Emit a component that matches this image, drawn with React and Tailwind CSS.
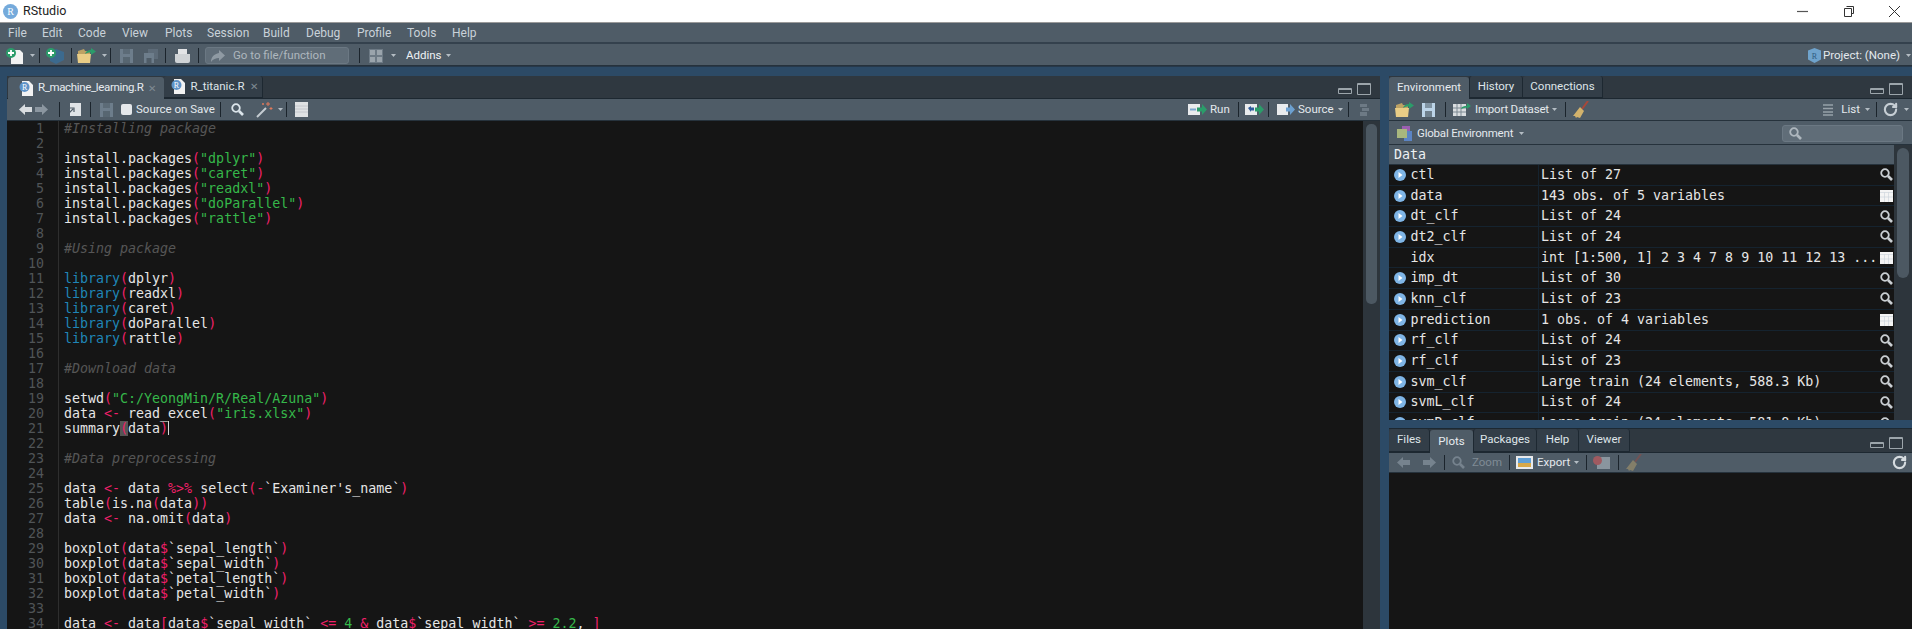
import React from 'react';
import { RotateCw } from 'lucide-react';

const codeLines = [
  '#Installing package', '', 'install.packages("dplyr")', 'install.packages("caret")', 'install.packages("readxl")',
  'install.packages("doParallel")', 'install.packages("rattle")', '', '#Using package', '',
  'library(dplyr)', 'library(readxl)', 'library(caret)', 'library(doParallel)', 'library(rattle)', '',
  '#Download data', '', 'setwd("C:/YeongMin/R/Real/Azuna")', 'data <- read_excel("iris.xlsx")', 'summary(data)', '',
  '#Data preprocessing', '', "data <- data %>% select(-`Examiner's_name`)", 'table(is.na(data))', 'data <- na.omit(data)', '',
  'boxplot(data$`sepal_length`)', 'boxplot(data$`sepal_width`)', 'boxplot(data$`petal_length`)', 'boxplot(data$`petal_width`)', '',
  'data <- data[data$`sepal_width` <= 4 & data$`sepal_width` >= 2.2, ]',
];

const envRows = [
  ['ctl', 'List of 27', 'search'],
  ['data', '143 obs. of 5 variables', 'grid'],
  ['dt_clf', 'List of 24', 'search'],
  ['dt2_clf', 'List of 24', 'search'],
  ['idx', 'int [1:500, 1] 2 3 4 7 8 9 10 11 12 13 ...', 'grid', true],
  ['imp_dt', 'List of 30', 'search'],
  ['knn_clf', 'List of 23', 'search'],
  ['prediction', '1 obs. of 4 variables', 'grid'],
  ['rf_clf', 'List of 24', 'search'],
  ['rf_clf', 'List of 23', 'search'],
  ['svm_clf', 'Large train (24 elements, 588.3 Kb)', 'search'],
  ['svmL_clf', 'List of 24', 'search'],
  ['svmR_clf', 'Large train (24 elements, 581.8 Kb)', 'search'],
];

// colour a single token of R source the way the dark theme does
const tokenClass = (t) => {
  if (t.startsWith('"')) return 'text-[#35b84a]';
  if (/^[\d.]+$/.test(t)) return 'text-[#35b84a]';
  if (t === 'library') return 'text-[#1f86b8]';
  if (/^(<-|%>%|<=|>=|[()[\]$&-])$/.test(t)) return 'text-[#f0206a]';
  return '';
};

const CodeLine = ({ text, cursor }) => {
  if (text.startsWith('#')) return <div className="h-[15px] italic text-[#565656]">{text}</div>;
  const tokens = text.split(/("[^"]*"|<-|%>%|<=|>=|[()[\]$&-]|\blibrary\b|\b\d+(?:\.\d+)?\b)/).filter(Boolean);
  return (
    <div className="h-[15px]">
      {tokens.map((t, i) => (
        <span key={i} className={cursor && i === 1 ? 'bg-[#555555] text-[#f0206a]' : tokenClass(t)}>{t}</span>
      ))}
      {cursor && <span className="inline-block w-px h-[14px] align-top bg-[#d8d8d8]" />}
    </div>
  );
};

const Caret = ({ className = '' }) => (
  <svg className={`w-[5px] h-[3px] shrink-0 ${className}`} viewBox="0 0 5 3"><path d="M0 0h5L2.5 3z" fill="#b4bdc4" /></svg>
);
const Sep = ({ className = '' }) => <div className={`w-px h-[15px] shrink-0 bg-[#1b242c] ${className}`} />;

const SaveIcon = ({ color = '#6d7d8b', className = '' }) => (
  <svg className={`w-[13px] h-[14px] shrink-0 ${className}`} viewBox="0 0 13 14">
    <path d="M0 0h13v14H0z" fill={color} />
    <path d="M3 0h7v5H3z" fill="#4f5c67" opacity=".55" />
    <path d="M3 8h7v6H3z" fill="#4f5c67" opacity=".7" />
  </svg>
);
const SaveAllIcon = ({ className = '' }) => (
  <svg className={`w-[14px] h-[14px] shrink-0 ${className}`} viewBox="0 0 14 14">
    <path d="M4 0h10v10H4z" fill="#5d6b78" />
    <path d="M0 4h10v10H0z" fill="#6d7d8b" />
    <path d="M2.5 9h5v5h-5z" fill="#4f5c67" />
  </svg>
);
const Folder = ({ className = '' }) => (
  <svg className={`w-[19px] h-[15px] shrink-0 ${className}`} viewBox="0 0 19 15">
    <path d="M1 3l6-2 1 2h5v3H1z" fill="#bda264" />
    <path d="M0 6h14l-1 9H1z" fill="#e9cd86" />
    <path d="M8 6c1-3 3-4 6-4V0l5 3.500L14 7V4.500c-2 0-4 0-6 1.500z" fill="#2b9c6a" />
  </svg>
);
const Broom = ({ dim, className = '' }) => (
  <svg className={`w-[16px] h-[18px] shrink-0 ${className} ${dim ? 'opacity-40' : ''}`} viewBox="0 0 16 18">
    <path d="M15 0L9 8" stroke="#a8483a" strokeWidth="2" />
    <path d="M7 6l4 4-4 7-3-1-1 1-1-2-2 0z" fill="#d2b26c" />
  </svg>
);
const Search = ({ className = '', color = '#c9ced2' }) => (
  <svg className={`w-[13px] h-[13px] shrink-0 ${className}`} viewBox="0 0 13 13" fill="none" stroke={color}>
    <circle cx="5" cy="5" r="3.8" strokeWidth="1.8" />
    <path d="M8 8l4 4" strokeWidth="2.6" />
  </svg>
);
const GridIcon = () => (
  <svg className="w-[13px] h-[12px] shrink-0" viewBox="0 0 13 12">
    <path d="M0 0h13v12H0z" fill="#f4f4f4" />
    <path d="M0 2.5h13M4.5 2.5V12M8.5 2.5V12M0 7h13" stroke="#c8d0d8" strokeWidth=".6" />
  </svg>
);
const Arrow = ({ dir = 'left', color = '#d9dde0', className = '' }) => (
  <svg className={`w-[13px] h-[11px] shrink-0 ${className}`} viewBox="0 0 13 11">
    <path d={dir === 'left' ? 'M0 5.5L6 0v3h7v5H6v3z' : 'M13 5.5L7 0v3H0v5h7v3z'} fill={color} />
  </svg>
);
const RDoc = ({ className = '' }) => (
  <svg className={`w-[14px] h-[15px] shrink-0 ${className}`} viewBox="0 0 14 15">
    <path d="M3 0h7l4 4v11H3z" fill="#f2f2f2" />
    <circle cx="5.5" cy="6" r="5" fill="#5e93c8" />
    <text x="5.5" y="8.8" textAnchor="middle" fontSize="8" fill="#fff" fontFamily="Liberation Serif">R</text>
  </svg>
);
const PaneButtons = ({ className = '' }) => (
  <div className={`flex items-end gap-[5px] ${className}`}>
    <div className="w-[14px] h-[6px] rounded-[1px] border border-[#9ca5ab] border-t-2 mb-[1px]" />
    <div className="w-[14px] h-[12px] rounded-[1px] border border-[#9ca5ab] border-t-2" />
  </div>
);
const Tab = ({ label, active, close, icon, className = '' }) => (
  <div className={`flex items-center justify-center h-full rounded-t-[3px] shrink-0 ${active ? 'bg-[#4f5c67] text-[#e6ebef]' : 'bg-[#333e48] border-b border-[#1d2831] text-[#dfe5e9]'} ${className}`}>
    {icon && <RDoc className="mr-[5px]" />}
    <span>{label}</span>
    {close && <span className="ml-[5px] text-[10px] text-[#7f8a93]">✕</span>}
  </div>
);

const Bar = ({ className = '', children }) => (
  <div className={`flex items-center shrink-0 bg-[#4f5c67] border-b border-[#26323c] text-[#e4e9ed] ${className}`}>{children}</div>
);

const menu = [
  ['File', 'w-[34px]'], ['Edit', 'w-[36px]'], ['Code', 'w-[44px]'], ['View', 'w-[43px]'], ['Plots', 'w-[42px]'], ['Session', 'w-[56px]'],
  ['Build', 'w-[43px]'], ['Debug', 'w-[51px]'], ['Profile', 'w-[50px]'], ['Tools', 'w-[45px]'], ['Help', 'w-[40px]'],
];

const App = () => (
  <div className="w-[1912px] h-[629px] overflow-hidden flex flex-col bg-[#2c4a66] font-['Roboto',sans-serif] text-[11.5px]">
    {/* window title */}
    <div className="flex items-center h-[23px] shrink-0 bg-white border-b border-[#9a9a9a] text-[#222222]">
      <div className="ml-[3px] w-[15px] h-[15px] rounded-full bg-[#75aadb] flex items-center justify-center text-white text-[10px] font-['Liberation_Serif',serif]">R</div>
      <span className="ml-[5px] text-[12.5px]">RStudio</span>
      <svg className="ml-auto mr-[35px] w-[11px] h-[11px]" viewBox="0 0 11 11"><path d="M0 5.5h11" stroke="#555" strokeWidth="1.2" /></svg>
      <svg className="mr-[35px] w-[11px] h-[11px]" viewBox="0 0 11 11" fill="none" stroke="#333"><path d="M3.5 .5h7v7h-2" /><path d="M1.5 2.5h7v8h-7z" fill="#fff" /></svg>
      <svg className="mr-[12px] w-[11px] h-[11px]" viewBox="0 0 11 11"><path d="M0 0l11 11M11 0L0 11" stroke="#333" strokeWidth="1" /></svg>
    </div>

    {/* menu bar */}
    <div className="flex items-center h-[21px] shrink-0 pl-[8px] bg-[#4f5c67] border-b-2 border-[#34414d] text-[#c9d2d9] text-[12px]">
      {menu.map(([label, w]) => <span key={label} className={w}>{label}</span>)}
    </div>

    {/* main toolbar */}
    <div className="flex items-center h-[22px] shrink-0 pt-[2px] bg-[#4f5c67] border-b border-[#26323c] text-[#e4e9ed]">
      <svg className="ml-[6px] w-[17px] h-[16px] shrink-0" viewBox="0 0 17 16"><path d="M5 2h9l3 3v11H5z" fill="#f2f2f2" /><circle cx="5" cy="5" r="5" fill="#2b9c6a" /><path d="M5 2v6M2 5h6" stroke="#fff" strokeWidth="1.8" /></svg>
      <Caret className="ml-[7px]" />
      <Sep className="ml-[4px]" />
      <svg className="ml-[6px] w-[19px] h-[16px] shrink-0" viewBox="0 0 19 16"><path d="M10 1l8 3v8l-8 4-6-3V4z" fill="#3c6a8e" /><circle cx="5" cy="5" r="5" fill="#2b9c6a" /><path d="M5 2v6M2 5h6" stroke="#fff" strokeWidth="1.8" /></svg>
      <Sep className="ml-[6px]" />
      <Folder className="ml-[5px]" />
      <Caret className="ml-[6px]" />
      <Sep className="ml-[3px]" />
      <SaveIcon className="ml-[9px]" />
      <SaveAllIcon className="ml-[11px]" />
      <Sep className="ml-[7px]" />
      <svg className="ml-[9px] w-[15px] h-[14px] shrink-0" viewBox="0 0 15 14"><path d="M3 0h9v5H3z" fill="#e2e4e6" /><path d="M0 5h15v7a2 2 0 0 1-2 2H2a2 2 0 0 1-2-2z" fill="#cfd3d6" /></svg>
      <Sep className="ml-[8px]" />
      <div className="ml-[6px] w-[144px] h-[17px] flex items-center rounded-[3px] bg-[#606d78] border border-[#6b7883] text-[#aeb7be]">
        <svg className="ml-[5px] w-[14px] h-[12px] shrink-0" viewBox="0 0 14 12"><path d="M8 0l6 5.5L8 11V8C5 8 2 9 0 12c0-5 3-8 8-9z" fill="#8f9aa3" /></svg>
        <span className="ml-[8px]">Go to file/function</span>
      </div>
      <Sep className="ml-[10px]" />
      <svg className="ml-[9px] w-[14px] h-[14px] shrink-0" viewBox="0 0 14 14"><path d="M0 0h14v14H0z" fill="#6d7a85" /><path d="M1 1h5v5H1zM8 1h5v5H8zM1 8h5v5H1zM8 8h5v5H8z" fill="#9aa4ac" /></svg>
      <Caret className="ml-[8px]" />
      <span className="ml-[10px] w-[33px] text-[#eef2f5]">Addins</span>
      <Caret className="ml-[7px]" />
      <svg className="ml-auto w-[13px] h-[15px] shrink-0" viewBox="0 0 13 15"><path d="M6.500 0L13 2.500v9L6.500 15 0 11.500v-9z" fill="#6fa3cc" /><text x="6.500" y="10.500" textAnchor="middle" fontSize="8" fill="#2f5c80" fontFamily="Liberation Serif">R</text></svg>
      <span className="ml-[2px]">Project: (None)</span>
      <Caret className="ml-[6px] mr-[1px]" />
    </div>

    <div className="flex flex-1 min-h-0 pt-[9px] pl-[7px] border-t border-[#26384a]">
      {/* source pane */}
      <div className="flex flex-col w-[1373px] shrink-0">
        <div className="relative flex items-end h-[23px] shrink-0 pl-[1px] bg-[#2f3840] border-b border-[#1d2831]">
          <Tab label="R_machine_learning.R" active close icon className="w-[156px] -mb-px h-[24px] pl-[3px] tracking-[-0.35px]" />
          <Tab label="R_titanic.R" close icon className="w-[99px] pl-[3px] border-r border-[#1d2831]" />
          <PaneButtons className="ml-auto mr-[9px] mb-[3px]" />
        </div>
        <Bar className="h-[22px]">
          <Arrow className="ml-[12px]" />
          <Arrow dir="right" color="#8b96a0" className="ml-[3px]" />
          <Sep className="ml-[11px]" />
          <svg className="ml-[7px] w-[14px] h-[13px] shrink-0" viewBox="0 0 14 13"><path d="M3 0h11v13H3z" fill="#dfe3e6" /><path d="M0 12l6-6M3 5h4v4" stroke="#4f5c67" strokeWidth="1.2" fill="none" /></svg>
          <Sep className="ml-[9px]" />
          <SaveIcon className="ml-[9px]" />
          <div className="ml-[8px] w-[11px] h-[11px] rounded-[2px] bg-[#e4e7ea] shrink-0" />
          <span className="ml-[4px] w-[74px] shrink-0 whitespace-nowrap">Source on Save</span>
          <Sep className="ml-[10px]" />
          <Search className="ml-[10px]" color="#dbe4ea" />
          <svg className="ml-[12px] w-[17px] h-[17px] shrink-0" viewBox="0 0 17 17"><path d="M1 16l9-9" stroke="#c5ccd1" strokeWidth="2" /><path d="M12 1v4M10 3h4M15 6v3M13.500 7.500h3M7 2v2M6 3h2" stroke="#e0795a" strokeWidth="1" /></svg>
          <Caret className="ml-[5px]" />
          <Sep className="ml-[3px]" />
          <svg className="ml-[8px] w-[13px] h-[15px] shrink-0" viewBox="0 0 13 15"><path d="M0 0h13v15H0z" fill="#dfe2e4" /><path d="M0 4h13M0 7h13M0 10h13" stroke="#bcc2c7" strokeWidth=".8" /></svg>

          <svg className="ml-auto w-[19px] h-[13px] shrink-0" viewBox="0 0 19 13"><path d="M0 1h12v11H0z" fill="#e9ebed" /><path d="M2 6.500h6" stroke="#7da7cf" strokeWidth="2" /><path d="M9 4.500h5V1l5 5.500-5 5.500V8.500H9z" fill="#2b9c6a" /></svg>
          <span className="ml-[3px] w-[18px]">Run</span>
          <Sep className="ml-[10px]" />
          <svg className="ml-[6px] w-[19px] h-[13px] shrink-0" viewBox="0 0 19 13"><path d="M0 1h12v11H0z" fill="#e9ebed" /><path d="M3 5l3-2v1.500h3v3H6V9z" fill="#2f5c9c" /><path d="M10 4.500h4V1l5 5.500-5 5.500V8.500h-4z" fill="#2b9c6a" /></svg>
          <Sep className="ml-[4px]" />
          <svg className="ml-[8px] w-[18px] h-[13px] shrink-0" viewBox="0 0 18 13"><path d="M0 1h11v11H0z" fill="#e9ebed" /><path d="M9 4.500h4V1l5 5.500-5 5.500V8.500H9z" fill="#6ca0d0" /></svg>
          <span className="ml-[3px] w-[33px]">Source</span>
          <Caret className="ml-[7px]" />
          <Sep className="ml-[5px]" />
          <svg className="ml-[9px] mr-[10px] w-[12px] h-[12px] shrink-0" viewBox="0 0 12 12"><path d="M2 0h7v3H2zM4 4h7v3H4zM2 8h7v4H2z" fill="#6d7a85" /></svg>
        </Bar>
        <div className="flex flex-1 min-h-0 bg-[#151515] font-['DejaVu_Sans_Mono',monospace] text-[13.3px] leading-[15px] text-[#e6e6e6] whitespace-pre">
          <div className="w-[52px] shrink-0 pr-[7px] text-right text-[#505457] border-r border-[#2e2e2e]">
            {codeLines.map((_, i) => <div key={i} className="h-[15px] pr-[7px]">{i + 1}</div>)}
          </div>
          <div className="flex-1 pl-[5px]">
            {codeLines.map((l, i) => <CodeLine key={i} text={l} cursor={i === 20} />)}
          </div>
          <div className="w-[17px] shrink-0 bg-[#2d353c] pl-[3px] pt-[3px]">
            <div className="w-[11px] h-[180px] rounded-[5px] bg-[#4c5862]" />
          </div>
        </div>
      </div>

      <div className="flex flex-col w-[523px] ml-[9px] shrink-0">
        {/* environment pane */}
        <div className="flex flex-col h-[344px] shrink-0 overflow-hidden">
          <div className="flex items-end h-[23px] shrink-0 bg-[#2f3840] border-b border-[#1d2831]">
            <Tab label="Environment" active className="w-[80px] -mb-px h-[24px]" />
            <Tab label="History" className="w-[54px] border-x border-[#1d2831]" />
            <Tab label="Connections" className="w-[80px] border-r border-[#1d2831]" />
            <PaneButtons className="ml-auto mr-[9px] mb-[3px]" />
          </div>
          <Bar className="h-[22px]">
            <Folder className="ml-[6px]" />
            <SaveIcon color="#bcd4e8" className="ml-[8px]" />
            <Sep className="ml-[10px]" />
            <svg className="ml-[7px] w-[18px] h-[13px] shrink-0" viewBox="0 0 18 13"><path d="M0 1h13v12H0z" fill="#d9dde0" /><path d="M0 5h13M0 9h13M4 1v12M8 1v12" stroke="#7d8992" /><path d="M8 6c1-3 3-3 6-3V0l4 3-4 3V4.500c-2 0-4 .5-6 1.500z" fill="#2b9c6a" /></svg>
            <span className="ml-[4px] w-[72px] shrink-0 whitespace-nowrap tracking-[-0.2px]">Import Dataset</span>
            <Caret className="ml-[5px]" />
            <Sep className="ml-[8px]" />
            <Broom className="ml-[7px]" />
            <svg className="ml-auto w-[10px] h-[12px] shrink-0" viewBox="0 0 10 12"><path d="M0 1h10M0 4.500h10M0 8h10M0 11h10" stroke="#97a1a9" strokeWidth="1.4" /></svg>
            <span className="ml-[8px]">List</span>
            <Caret className="ml-[5px]" />
            <Sep className="ml-[6px]" />
            <RotateCw className="ml-[6px] w-[15px] h-[15px] shrink-0 text-[#c6ced4]" strokeWidth={3.4} />
            <Caret className="ml-[6px] mr-[3px]" />
          </Bar>
          <Bar className="h-[24px] pt-[2px]">
            <svg className="ml-[8px] w-[15px] h-[15px] shrink-0" viewBox="0 0 15 15"><path d="M5 0h8v10H5z" fill="#9a5fb0" /><path d="M7 5h8v10H7z" fill="#5b84c4" /><path d="M0 3h10v9H0z" fill="#a9b77e" /></svg>
            <span className="ml-[5px] w-[96px] shrink-0 whitespace-nowrap tracking-[-0.2px]">Global Environment</span>
            <Caret className="ml-[6px]" />
            <div className="ml-auto mr-[9px] w-[121px] h-[17px] flex items-center rounded-[3px] bg-[#606d78] border border-[#6b7883]">
              <Search className="ml-[6px]" color="#aeb7be" />
            </div>
          </Bar>
          <div className="flex flex-1 min-h-0 font-['DejaVu_Sans_Mono',monospace] text-[13.3px] text-[#e6e6e6] whitespace-pre">
            <div className="flex-1 min-w-0 bg-[#151515]">
              <div className="h-[20px] pl-[5px] leading-[19px] bg-[#4f5c67] border-b border-[#26323c] text-[#edf0f2]">Data</div>
              {envRows.map(([name, value, icon, flat], i) => (
                <div key={i} className="flex items-center h-[20.7px] border-b border-[#15232f]">
                  <div className="flex items-center w-[150px] shrink-0 h-full border-r border-[#15232f]">
                    {flat ? <div className="w-[21.5px] shrink-0" /> : (
                      <svg className="ml-[5px] mr-[4.5px] w-[12px] h-[12px] shrink-0" viewBox="0 0 12 12"><circle cx="6" cy="6" r="6" fill="#7fb5e6" /><path d="M4.500 3l4 3-4 3z" fill="#fff" /></svg>
                    )}
                    <span>{name}</span>
                  </div>
                  <span className="ml-[2px] flex-1">{value}</span>
                  <div className="w-[13px] mr-[1px] shrink-0">{icon === 'grid' ? <GridIcon /> : <Search />}</div>
                </div>
              ))}
            </div>
            <div className="w-[18px] shrink-0 bg-[#2d353c] pl-[3px] pt-[3px]">
              <div className="w-[12px] h-[130px] rounded-[6px] bg-[#4c5862]" />
            </div>
          </div>
        </div>

        {/* plots pane */}
        <div className="flex flex-col flex-1 min-h-0 mt-[8px] border-t border-[#1d2831]">
          <div className="flex items-end h-[24px] shrink-0 bg-[#2f3840] border-b border-[#1d2831]">
            <Tab label="Files" className="w-[41px] border-r border-[#1d2831]" />
            <Tab label="Plots" active className="w-[43px] -mb-px h-[25px]" />
            <Tab label="Packages" className="w-[64px] border-x border-[#1d2831]" />
            <Tab label="Help" className="w-[42px] border-r border-[#1d2831]" />
            <Tab label="Viewer" className="w-[51px] border-r border-[#1d2831]" />
            <PaneButtons className="ml-auto mr-[9px] mb-[3px]" />
          </div>
          <Bar className="h-[20px]">
            <Arrow color="#76838e" className="ml-[8px]" />
            <Arrow dir="right" color="#76838e" className="ml-[13px]" />
            <Sep className="ml-[8px]" />
            <Search className="ml-[7px]" color="#76838e" />
            <span className="ml-[7px] w-[28px] text-[#7f8b95]">Zoom</span>
            <Sep className="ml-[9px]" />
            <svg className="ml-[6px] w-[17px] h-[13px] shrink-0" viewBox="0 0 17 13"><path d="M0 0h17v13H0z" fill="#e8eaec" /><path d="M2 2h13v5H2z" fill="#5f9fd6" /><path d="M2 7h13v4H2z" fill="#d8a848" /></svg>
            <span className="ml-[4px] w-[31px]">Export</span>
            <Caret className="ml-[6px]" />
            <Sep className="ml-[7px]" />
            <svg className="ml-[6px] w-[17px] h-[13px] shrink-0" viewBox="0 0 17 13"><path d="M4 1h13v12H4z" fill="#8a959e" /><circle cx="4.500" cy="4.500" r="4.500" fill="#a05a60" /></svg>
            <Sep className="ml-[8px]" />
            <Broom dim className="ml-[7px]" />
            <RotateCw className="ml-auto mr-[5px] w-[15px] h-[15px] shrink-0 text-[#d6dce0]" strokeWidth={3.4} />
          </Bar>
          <div className="flex-1 bg-[#151515]" />
        </div>
      </div>
    </div>
  </div>
);

export default App;
